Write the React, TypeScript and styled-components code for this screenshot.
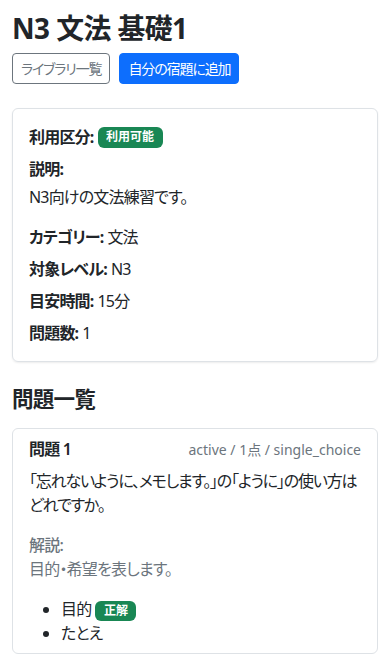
import React from "react";
import styled, { createGlobalStyle } from "styled-components";

const GlobalStyle = createGlobalStyle`
  * { box-sizing: border-box; }
  body {
    margin: 0;
    background: #fff;
    color: #212529;
    font-family: "Noto Sans", "Noto Sans CJK JP", sans-serif;
    font-size: 16px;
    line-height: 1.5;
    font-feature-settings: "palt";
    letter-spacing: -0.05em;
  }
`;

const Page = styled.main`
  padding: 12px;
`;

const Title = styled.h1`
  margin: 0 0 8px;
  font-size: 27.85px;
  font-weight: 700;
  line-height: 1.2;
  letter-spacing: -0.02em;
`;

const Actions = styled.div`
  display: flex;
  gap: 9px;
  margin-bottom: 24px;
`;

const Button = styled.button<{ $primary?: boolean }>`
  font: inherit;
  font-size: 14px;
  line-height: 1.5;
  letter-spacing: -0.08em;
  padding: 4px 8px;
  border-radius: 4px;
  border: 1px solid ${(p) => (p.$primary ? "#0d6efd" : "#6c757d")};
  background: ${(p) => (p.$primary ? "#0d6efd" : "#fff")};
  color: ${(p) => (p.$primary ? "#fff" : "#6c757d")};
  cursor: pointer;
`;

const Card = styled.section<{ $tight?: boolean }>`
  border: 1px solid #dee2e6;
  border-radius: 6px;
  padding: ${(p) => (p.$tight ? "8px 16px" : "16px")};
  margin-bottom: 24px;
  box-shadow: ${(p) => (p.$tight ? "none" : "0 1px 2px rgba(0, 0, 0, 0.075)")};
`;

const Field = styled.p<{ $gap?: number }>`
  margin: 0 0 ${(p) => p.$gap ?? 8}px;
  display: flex;
  align-items: center;
  gap: 4px;
`;

const Label = styled.strong`
  font-weight: 700;
`;

const Text = styled.p<{ $gap?: number; $muted?: boolean; $weight?: number }>`
  margin: 0 0 ${(p) => p.$gap ?? 0}px;
  color: ${(p) => (p.$muted ? "#6c757d" : "inherit")};
  font-weight: ${(p) => p.$weight ?? 400};
`;

const Question = styled.p`
  margin: 0 0 16px;
  letter-spacing: -0.075em;
`;

const Badge = styled.span`
  display: inline-block;
  background: #198754;
  color: #fff;
  font-size: 12px;
  font-weight: 700;
  line-height: 1;
  letter-spacing: 0;
  padding: 4.2px 8.5px;
  border-radius: 6px;
`;

const SectionTitle = styled.h2`
  margin: 0 0 16px;
  font-size: 21.57px;
  font-weight: 700;
  line-height: 1.2;
`;

const QuestionHead = styled.div`
  display: flex;
  justify-content: space-between;
  align-items: center;
  margin-bottom: 8px;
`;

const QuestionNo = styled.strong`
  font-weight: 600;
`;

const Meta = styled.span`
  font-size: 14px;
  letter-spacing: 0;
  color: #6c757d;
`;

const Choices = styled.ul`
  margin: 0;
  padding-left: 32px;
`;

const Choice = styled.li`
  & > span { margin-left: 4px; }
`;

export default function App() {
  return (
    <>
      <GlobalStyle />
      <Page>
        <Title>N3 文法 基礎1</Title>
        <Actions>
          <Button>ライブラリ一覧</Button>
          <Button $primary>自分の宿題に追加</Button>
        </Actions>

        <Card>
          <Field>
            <Label>利用区分:</Label>
            <Badge>利用可能</Badge>
          </Field>
          <Field $gap={4}>
            <Label>説明:</Label>
          </Field>
          <Text $gap={16}>N3向けの文法練習です。</Text>
          <Field>
            <Label>カテゴリー:</Label> 文法
          </Field>
          <Field>
            <Label>対象レベル:</Label> N3
          </Field>
          <Field>
            <Label>目安時間:</Label> 15分
          </Field>
          <Field $gap={0}>
            <Label>問題数:</Label> 1
          </Field>
        </Card>

        <SectionTitle>問題一覧</SectionTitle>
        <Card $tight>
          <QuestionHead>
            <QuestionNo>問題 1</QuestionNo>
            <Meta>active / 1点 / single_choice</Meta>
          </QuestionHead>
          <Question>
            「忘れないように、メモします。」の「ように」の使い方はどれですか。
          </Question>
          <Text $muted $weight={500}>解説:</Text>
          <Text $muted $gap={16}>目的・希望を表します。</Text>
          <Choices>
            <Choice>
              目的<span><Badge>正解</Badge></span>
            </Choice>
            <Choice>たとえ</Choice>
          </Choices>
        </Card>
      </Page>
    </>
  );
}
